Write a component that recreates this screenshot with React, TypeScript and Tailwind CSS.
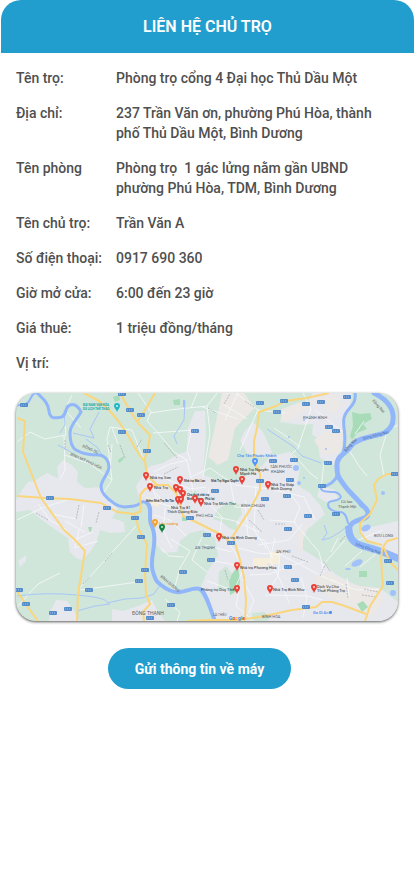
import { Fragment } from 'react';

const details = [
  { label: 'Tên trọ:', value: 'Phòng trọ cổng 4 Đại học Thủ Dầu Một' },
  { label: 'Địa chỉ:', value: '237 Trần Văn ơn, phường Phú Hòa, thành phố Thủ Dầu Một, Bình Dương' },
  { label: 'Tên phòng', value: 'Phòng trọ  1 gác lửng nằm gần UBND phường Phú Hòa, TDM, Bình Dương' },
  { label: 'Tên chủ trọ:', value: 'Trần Văn A' },
  { label: 'Số điện thoại:', value: '0917 690 360' },
  { label: 'Giờ mở cửa:', value: '6:00 đến 23 giờ' },
  { label: 'Giá thuê:', value: '1 triệu đồng/tháng' },
];

const urban = [
  'M16 500L22 490 28 482 36 480 47 473 58 478 57 467 63 460 72 465 78 472 77 482 85 488 100 487 107 500 118 508 112 518 124 522 125 532 110 533 100 530 96 543 90 552 82 560 76 558 70 552 68 538 53 528 38 517 30 510 16 512Z',
  'M136 486L140 480 145 471 150 466 163 463 173 457 187 451 188 428 195 411 205 411 206 432 205 450 203 475 216 479 233 482 250 474 262 466 270 456 290 452 300 468 297 485 310 493 320 505 325 514 307 530 300 548 320 560 335 574 352 583 368 590 380 588 398 602V621H215L208 602 200 589 207 572 218 555 215 538 203 530 190 533 180 541 177 552 163 553 154 541 150 515 146 503 140 503Z',
  'M313 393H352L350 407 343 418 344 432 342 448 333 465 320 458 317 438 300 425 280 422 283 412 306 405Z',
  'M244 432L253 422 263 432 272 452 265 458 247 453 240 441Z',
  'M50 612L56 600 67 601 74 611 80 621H49Z',
  'M112 609L123 611 138 606 152 600 158 612 165 621H112Z',
  'M18 561L26 555 26 561 20 567Z',
  'M320 486L335 490 338 499 326 502 317 497Z',
  'M376 526L398 521V555L376 545 363 538 360 529Z',
];

const beige = [
  'M222 393H244L255 408 235 428 228 460 218 465 208 457 213 435 218 412Z',
  'M282 409L300 402 314 401 309 408 292 420 281 422Z',
  'M314 440L327 431 342 434 340 453 323 455Z',
  'M313 577L330 573 352 585 378 588 384 600 372 618 352 605 333 599 316 588Z',
  'M311 521L303 534 303 552 297 545 300 530Z',
  'M321 399L334 394 342 404 334 414 324 409Z',
];

const parks = [
  'M352 412L360 414 370 413 372 419 363 424 367 429 357 433 352 440 350 436 353 426Z',
  'M232 574L238 566 240 579 239 590 230 595 229 581Z',
  'M357 604L363 601 368 607 362 612Z',
  'M359 571L367 571 367 577 359 577Z',
  'M118 460L124 456 123 460 119 463Z',
  'M113 397L119 395 120 400 115 402Z',
  'M173 400L180 399 180 405 174 405Z',
  'M182 517L187 517 187 521 182 521Z',
  'M88 527L92 527 91 532 89 531Z',
];

const paleParks = [
  'M217 510L231 501 240 505 242 514 236 522 238 531 229 528 222 522 213 519Z',
  'M190 490L196 491 201 498 194 500Z',
  'M285 434L296 425 313 424 312 434 298 446 289 443Z',
  'M252 613L264 612 270 617 268 621H252Z',
  'M219 572L226 566 232 574 228 588 218 590Z',
];

const minorRoads = [
  'M17 442L30 432 45 439 66 435 64 411',
  'M64 435L65 470 60 479 M65 455L90 464 112 480',
  'M17 520L42 508 70 499 M38 504L50 520 67 530',
  'M72 395L65 410 81 428 M112 444L110 470 M112 428L118 444 M145 463L132 430 110 427 107 439 112 480 102 495',
  'M138 393L151 412 147 421 158 433 174 452 187 460 191 479 195 504',
  'M150 413L170 410 188 408 207 406 218 392 M191 408L197 393 M207 406L210 433 203 477 M193 430L153 433',
  'M188 460L170 464 153 472 M191 432L187 450 191 462 M202 407L238 419 M223 404L247 419',
  'M225 420L238 393 M236 393L258 410 285 413 M258 410L240 450 M303 393L311 409 298 448 291 455',
  'M300 447L286 436 274 428 M315 410L343 432 M324 463L321 488 M294 455L310 473 318 479',
  'M191 477L210 468 235 485 270 489 304 497 315 520',
  'M171 539L190 551 180 568 174 590 M161 548L169 556 184 557 M202 537L192 560 207 572',
  'M209 489L207 502 222 517 219 537 M230 480L235 507 259 508 M203 514L235 521 259 532',
  'M245 500L248 536 264 540 273 559 M256 485L254 530 266 548 M226 538L244 568 235 588',
  'M238 548L258 553 281 555 303 566 321 576 337 582 M286 488L300 507 294 522 319 552 324 572',
  'M258 545L289 540 303 523 M270 520L296 522 M280 552L278 576 269 590 M250 575L270 574 290 566 307 561',
  'M242 579L254 600 249 613 M275 538L270 560 282 584 289 603 M265 595L308 596 322 600',
  'M321 576L323 565 345 540 M330 580L357 590 379 589 M347 578L349 598 M301 577L307 598 303 617',
  'M77 591L136 526 M80 590L138 582',
  'M17 607L38 584 60 573',
  'M79 530L75 547 M65 521L85 532 M84 505L81 527 M93 532L72 541 M98 541L74 548 M52 514L77 519',
  'M364 421L355 434 M386 435L380 455 384 475 M349 450L359 466 367 476 M384 433L398 425',
  'M338 538L331 552 M356 541L383 530 M377 553L360 567 M362 551L345 566',
  'M165 599L180 612 177 621 M239 589L236 606 254 621 M207 581L230 589',
  'M150 481L158 503 178 508 M156 493L165 505 180 508 M156 474L173 482 190 489 206 487',
  'M154 515L170 520 186 536 M165 508L163 530 172 548 M205 545L232 552 M215 561L240 566',
];

const roadLabels = [
  'M164 443L177 458 M164 474L178 467 M120 445L125 458 M137 447L142 439 M108 445L111 452',
  'M65 440V450 M79 505L76 520 M99 512L96 523 M36 513L48 520 M105 561L112 553 M83 584L90 577',
  'M224 404L230 394 M208 408L216 413 M245 401L254 407 M258 510L264 520 M249 520L262 532',
  'M292 556L308 562 M324 562L330 571 M340 542L345 536 M320 576L325 565 M275 524H285',
  'M346 584L348 598 M364 589L378 592 M362 595L376 597 M225 570L228 580',
];

const mainRoads = [
  'M17 418L25 421 23 452 41 498 64 530 75 540 85 551 83 563 78 594 77 621',
  'M17 496L45 498 70 499 101 503',
  'M84 393L99 401 110 411 119 422 129 437 138 453 145 462',
  'M120 393L129 409 138 423 150 435 148 448 144 462',
  'M155 393L145 410 138 421',
  'M145 462L147 475 157 485 168 485 176 493 180 505 183 516 198 523 222 535 230 542',
  'M157 485L145 489 140 495 141 511 134 514 117 512 101 503',
  'M135 515L139 530 147 544 145 574 146 594 150 604 143 612 144 621',
  'M17 591L27 606 38 621',
  'M329 393L307 398 285 401 276 406 259 412 257 428 254 441 254 460 260 474 260 490 251 508 233 536 240 560 244 577 246 600 245 621',
  'M187 621L208 620 238 620 260 617 292 610 316 607 322 602 332 602 345 606 366 614',
  'M365 621L370 606 383 586 381 560 382 549 387 541 398 538',
  'M398 474H387L378 479 374 485 377 500 370 514 360 523 360 532 367 541 382 545',
  'M384 548L390 562 398 570',
];

const streams = [
  'M64 410L65 425 60 433 M71 452L58 445 M73 433L94 438 90 429 99 412 M103 457L98 448 86 439',
  'M185 401L184 420 174 436 177 444',
  'M17 596Q45 592 77 595T107 603L125 599 142 598 154 594 160 585',
  'M77 611L95 606 110 604',
  'M267 429L294 447 302 456 321 463',
  'M324 525L327 533 322 540 330 538 340 532 346 527',
];

const badges = [
  [24, 405], [130, 410], [141, 415], [122, 432], [122, 394], [50, 498], [147, 451],
  [195, 431], [260, 403], [284, 401], [306, 404], [321, 402], [347, 397], [277, 412], [329, 427], [336, 431],
  [328, 463], [273, 461], [294, 460], [290, 480], [287, 496], [260, 481], [265, 499], [322, 486], [395, 474], [215, 491],
  [107, 508], [135, 518], [141, 537], [145, 570], [139, 581], [89, 590], [19, 590], [26, 604], [68, 609],
  [53, 613], [150, 618], [190, 518], [207, 535], [231, 543], [211, 560], [183, 572], [171, 605],
  [308, 516], [336, 514], [288, 529], [288, 567], [295, 580], [306, 607], [388, 561], [390, 583],
];

const redPins = [
  [146, 477], [150, 488], [180, 481], [176, 489], [180, 491], [183, 495], [178, 501], [181, 501], [195, 500],
  [201, 503], [236, 471], [242, 481], [268, 486], [219, 538], [237, 567], [237, 590], [270, 590], [314, 589],
];

const places: [number, number, string][] = [
  [150, 479, 'Nhà trọ Sơn'], [154, 489, 'Nhà Trọ'], [240, 471, 'Nhà Trọ Nguyễn'], [240, 475, 'Mạnh Hà'],
  [271, 486, 'Nhà Trọ Giáp'], [271, 490, 'Bình Dương'], [222, 539, 'Nhà trọ Bình Dương'],
  [240, 569, 'Nhà trọ Phương Hòa'], [201, 591, 'Phòng trọ Duy Thiên'], [273, 591, 'Nhà Trọ Bình Như'],
  [317, 588, 'Dịch Vụ Cho'], [317, 592, 'Thuê Phòng Trọ'], [204, 505, 'Nhà Trọ Minh Thư'],
  [171, 509, 'Nhà Trọ 81'], [167, 513, 'Thích Quảng Đức'],
];

const crowdedPlaces: [number, number, string][] = [
  [184, 482, 'Nhà trọ Mai Lan'], [211, 482, 'Nhà Trọ Ngọc Quyên'], [187, 496, 'Cho thuê nhà trọ'],
  [187, 500, 'Bình Dương - Phú lợi'], [146, 502, 'Hiếm Nhà Trọ Ba Tân'],
];

const districts: [number, number, string][] = [
  [196, 517, 'PHÚ HÒA'], [195, 549, 'AN THẠNH'], [303, 419, 'KHÁNH BÌNH'], [276, 553, 'AN PHÚ'],
  [374, 537, 'BỬU LONG'], [270, 468, 'TÂN PHƯỚC'], [271, 473, 'KHÁNH'], [262, 618, 'BÌNH HÒA'],
  [241, 507, 'BÌNH CHUẨN'],
];

function Pin({ x, y, color }: { x: number; y: number; color: string }) {
  return (
    <g>
      <path
        d={`M${x} ${y + 4}C${x - 1} ${y + 1} ${x - 3} ${y} ${x - 3} ${y - 2}A3 3 0 0 1 ${x + 3} ${y - 2}C${x + 3} ${y} ${x + 1} ${y + 1} ${x} ${y + 4}Z`}
        fill={color}
      />
      <circle cx={x} cy={y - 2} r="1" fill="#fff" opacity=".8" />
    </g>
  );
}

function LocationMap() {
  return (
    <svg viewBox="16 393 382 228" role="img" aria-label="Bản đồ vị trí" className="block w-full rounded-[20px] bg-[#d1e6da] font-['Roboto',sans-serif] shadow-[0_1px_3px_rgba(0,0,0,0.65)]">
      <g fill="#e6e8ed">{urban.map((d) => <path key={d} d={d} />)}</g>
      <g fill="#ebe8e5">{beige.map((d) => <path key={d} d={d} />)}</g>
      <g fill="#cfe5d8">{paleParks.map((d) => <path key={d} d={d} />)}</g>
      <g fill="#a9dcb8">{parks.map((d) => <path key={d} d={d} />)}</g>
      <path d="M253 558h22v5h-8v3h-14Z M270 552h9v12h-9Z M146 497l10 2 4 8-10-2Z" fill="#f6eedb" />
      <g fill="none" stroke="#f7f8fa" strokeWidth="1" strokeLinejoin="round" opacity=".85">{minorRoads.map((d) => <path key={d} d={d} />)}</g>
      <g fill="none" stroke="#9a9fa6" strokeWidth="1" strokeDasharray="2 1" opacity=".6">{roadLabels.map((d) => <path key={d} d={d} />)}</g>
      <g fill="none" stroke="#a9c6f7" strokeWidth="1" strokeLinejoin="round">{streams.map((d) => <path key={d} d={d} />)}</g>
      <g fill="#a2c2fa">
        <ellipse cx="296" cy="468" rx="3" ry="3" />
        <ellipse cx="357" cy="563" rx="6" ry="3" transform="rotate(-25 357 563)" />
        <ellipse cx="348" cy="569" rx="3" ry="1" />
        <ellipse cx="366" cy="528" rx="5" ry="3" transform="rotate(-25 366 528)" />
        <ellipse cx="393" cy="593" rx="3" ry="3" />
        <circle cx="326" cy="449" r="1" />
        <circle cx="383" cy="493" r="2" />
        <circle cx="289" cy="437" r="1" />
        <circle cx="304" cy="420" r="1" />
        <circle cx="299" cy="483" r="2" />
        <circle cx="304" cy="478" r="1" />
        <path d="M183 400h2v7h-2Z" />
      </g>
      <g fill="none" stroke="#93b6fa" strokeLinecap="round" strokeLinejoin="round">
        <path strokeWidth="2" d="M35 393C30 395 31 402 26 404S18 404 16 406" />
        <path strokeWidth="3" d="M37 393C43 399 48 402 49 411S56 418 62 417C68 413 64 407 70 405S79 408 81 412C76 421 70 425 70 433S71 447 76 450 90 455 98 455 109 462 109 467C108 475 101 480 101 487S109 500 115 504 126 507 134 506 140 499 147 503" />
        <path strokeWidth="4" d="M147 503C153 507 148 518 151 524S155 536 154 545C153 556 150 563 153 572S156 581 161 585 172 593 180 592 194 587 200 589C207 594 210 609 215 621" />
        <path strokeWidth="5" d="M374 393C386 399 392 406 393 415S390 430 384 433 357 437 351 446 337 455 337 465 338 477 342 482C348 492 357 498 362 505" />
        <path strokeWidth="5" d="M362 505C371 512 369 517 362 519S350 523 349 529" />
        <path strokeWidth="7" strokeLinecap="butt" d="M349 526C348 536 352 542 360 545S381 550 399 559" />
        <path strokeWidth="3" d="M355 393C357 406 346 408 344 418S348 435 343 454L338 462" />
        <path strokeWidth="3" d="M338 474Q334 485 321 487" />
        <path strokeWidth="2" d="M321 487C320 493 328 491 334 492S344 498 337 500 328 501 328 505 334 512 340 512 347 519 348 523" />
      </g>
      <g fill="none" stroke="#fad67d" strokeWidth="2" strokeLinejoin="round">{mainRoads.map((d) => <path key={d} d={d} />)}</g>
      <g fill="#568cca">
        {badges.map(([x, y]) => <rect key={`${x}-${y}`} x={x - 4} y={y - 2} width="8" height="4" rx="1" />)}
      </g>
      <g stroke="#dbe8f6" strokeWidth="1" strokeDasharray="1 1" opacity=".55">
        {badges.map(([x, y]) => <path key={`${x}-${y}`} d={`M${x - 3} ${y}h6`} />)}
      </g>
      <g className="text-[4px]" fill="#59606a">
        {districts.map(([x, y, name]) => <text key={name} x={x} y={y}>{name}</text>)}
        <text x="341" y="503">Cù lao</text>
        <text x="338" y="508">Thạnh Hội</text>
        <text x="82" y="447" transform="rotate(24 82 447)">ĐỒNG DÙ</text>
        <text x="70" y="455" transform="rotate(25 70 455)">BÌNH MỸ PHÚ HÒA</text>
        <text x="160" y="577" transform="rotate(40 160 577)">BÌNH DƯƠNG</text>
        <text x="346" y="452" transform="rotate(-48 346 452)">Đồng Nai</text>
        <text x="372" y="401" transform="rotate(48 372 401)">Đồng Nai</text>
        <text x="355" y="545" transform="rotate(20 355 545)" fill="#3e6eb4">Sông Đồng Nai</text>
        <text x="363" y="440" transform="rotate(-15 363 440)" fill="#3e6eb4">Sông Đồng Nai</text>
      </g>
      <text x="132" y="615" className="text-[5px]" fill="#59606a">ĐÔNG THẠNH</text>
      <text x="213" y="616" className="text-[3px]" fill="#59606a">LÁI THIÊU</text>
      <g className="text-[3px] font-bold" fill="#16a3a6">
        <text x="83" y="406">ĐẠI NAM VĂN HÓA</text>
        <text x="83" y="410">DU LỊCH THỂ THAO</text>
      </g>
      <g className="text-[4px] font-medium">
        <text x="237" y="457" fill="#4a8bef">Chợ Tân Phước Khánh</text>
        <text x="159" y="525" fill="#eb9a3c">Lẩu nướng</text>
        <text x="313" y="614" fill="#4a8bef">Ga Dĩ An</text>
      </g>
      <g className="text-[4px]" fill="#26292d">
        {places.map(([x, y, name]) => <text key={name} x={x} y={y}>{name}</text>)}
      </g>
      <g className="text-[3px] font-medium" fill="#26292d">
        {crowdedPlaces.map(([x, y, name]) => <text key={name} x={x} y={y}>{name}</text>)}
      </g>
      <Pin x={117} y={408} color="#20b6c5" />
      <Pin x={255} y={463} color="#5595f5" />
      <Pin x={155} y={524} color="#f6a32c" />
      <Pin x={162} y={529} color="#168641" />
      {redPins.map(([x, y]) => <Pin key={`${x}-${y}`} x={x} y={y} color="#e94238" />)}
      <rect x="329" y="611" width="3" height="3" rx="1" fill="#5492ef" />
      <text x="229" y="620" className="text-[5px] font-bold">
        <tspan fill="#4285f4">G</tspan><tspan fill="#ea4335">o</tspan><tspan fill="#fbbc05">o</tspan><tspan fill="#4285f4">g</tspan><tspan fill="#34a853">l</tspan><tspan fill="#ea4335">e</tspan>
      </text>
    </svg>
  );
}

export default function App() {
  return (
    <div className="min-h-screen bg-white font-['Roboto',sans-serif] text-[#4f4f4f]">
      <header className="ml-px flex h-[53px] items-center justify-center rounded-t-[20px] bg-[#219ece]">
        <h1 className="text-base font-semibold text-white">LIÊN HỆ CHỦ TRỌ</h1>
      </header>
      <main className="px-4 pt-[15px] pb-8">
        <dl className="grid grid-cols-[100px_1fr] gap-y-[15px] text-sm/5 font-medium">
          {details.map(({ label, value }) => (
            <Fragment key={label}>
              <dt>{label}</dt>
              <dd className="max-w-[270px] whitespace-pre-wrap">{value}</dd>
            </Fragment>
          ))}
        </dl>
        <h2 className="mt-[15px] mb-5 text-sm/5 font-medium">Vị trí:</h2>
        <LocationMap />
        <div className="mt-[27px] flex justify-center pr-[15px]">
          <button type="button" className="h-[41px] rounded-full bg-[#219ece] px-[27px] text-sm font-bold text-white">
            Gửi thông tin về máy
          </button>
        </div>
      </main>
    </div>
  );
}
